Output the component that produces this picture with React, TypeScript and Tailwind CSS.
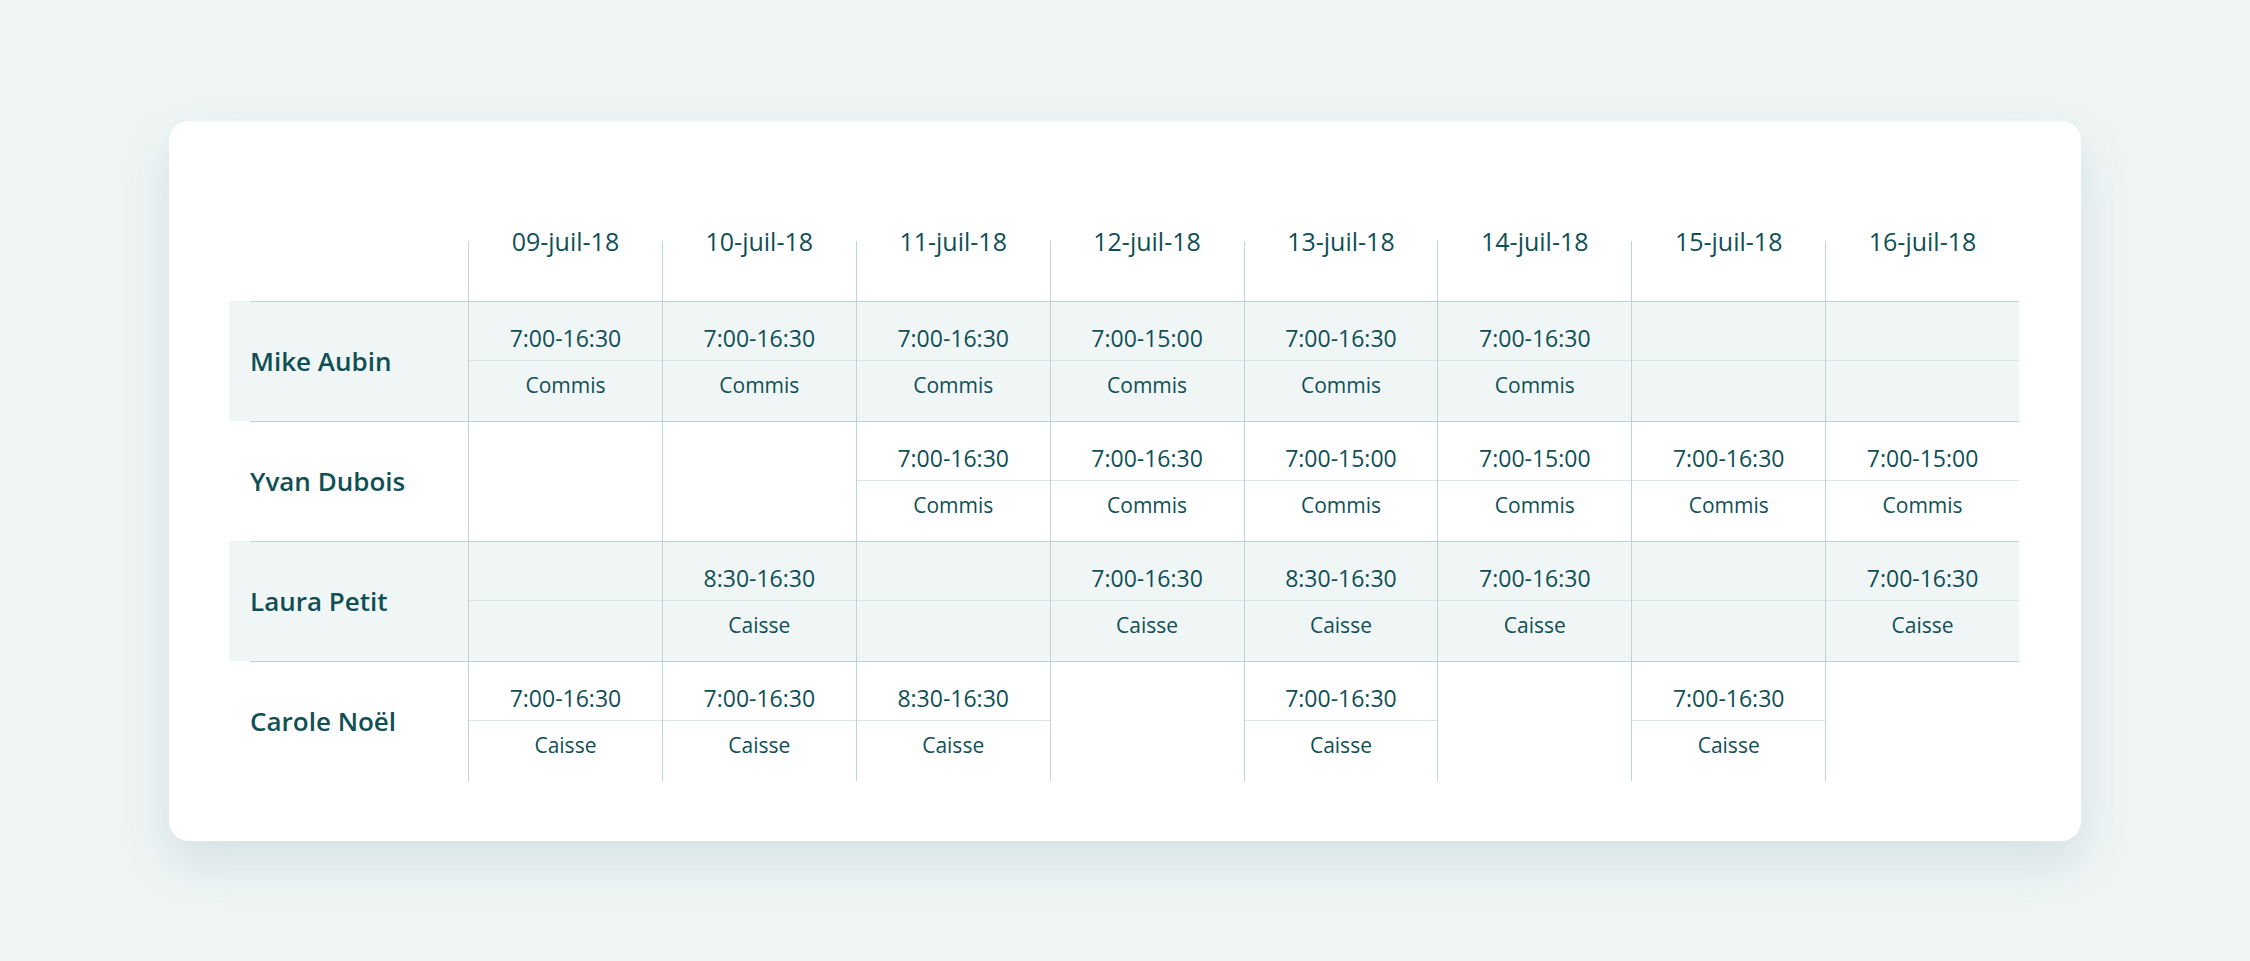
import React from "react";

type Shift = { t: string; r: string } | null;

const days = [
  "09-juil-18",
  "10-juil-18",
  "11-juil-18",
  "12-juil-18",
  "13-juil-18",
  "14-juil-18",
  "15-juil-18",
  "16-juil-18",
];

const C = (t: string): Shift => ({ t, r: "Commis" });
const K = (t: string): Shift => ({ t, r: "Caisse" });

const rows: { name: string; gray: boolean; shifts: Shift[] }[] = [
  {
    name: "Mike Aubin",
    gray: true,
    shifts: [C("7:00-16:30"), C("7:00-16:30"), C("7:00-16:30"), C("7:00-15:00"), C("7:00-16:30"), C("7:00-16:30"), null, null],
  },
  {
    name: "Yvan Dubois",
    gray: false,
    shifts: [null, null, C("7:00-16:30"), C("7:00-16:30"), C("7:00-15:00"), C("7:00-15:00"), C("7:00-16:30"), C("7:00-15:00")],
  },
  {
    name: "Laura Petit",
    gray: true,
    shifts: [null, K("8:30-16:30"), null, K("7:00-16:30"), K("8:30-16:30"), K("7:00-16:30"), null, K("7:00-16:30")],
  },
  {
    name: "Carole Noël",
    gray: false,
    shifts: [K("7:00-16:30"), K("7:00-16:30"), K("8:30-16:30"), null, K("7:00-16:30"), null, K("7:00-16:30"), null],
  },
];

function Cell({ s, gray }: { s: Shift; gray: boolean }) {
  const showLine = s !== null || gray;
  return (
    <div className="flex h-[119px] flex-col border-l border-[#c3d3d5]">
      <div
        className={`flex h-[59px] items-end justify-center pb-[8px] ${showLine ? "border-b border-[#d8e4e5]" : ""}`}
      >
        {s && <span className="text-[23px] leading-[28px]">{s.t}</span>}
      </div>
      <div className="flex h-[60px] justify-center pt-[10px]">
        {s && <span className="text-[21px] leading-[28px]">{s.r}</span>}
      </div>
    </div>
  );
}

export default function App() {
  return (
    <div
      className="flex min-h-[961px] w-full items-center justify-center bg-[#eff5f5] text-[#0f4f55]"
      style={{ fontFamily: '"Open Sans", "Noto Sans", sans-serif' }}
    >
      <div className="w-[1912px] rounded-[20px] bg-white pb-[60px] pl-[81px] pr-[62px] pt-[120px] shadow-[0_22px_50px_rgba(60,115,125,0.15)]">
        {/* header */}
        <div className="grid h-[60px] grid-cols-[218px_repeat(8,1fr)]">
          <div />
          {days.map((d) => (
            <div key={d} className="flex justify-center border-l border-[#c3d3d5]">
              <span className="-mt-[15px] text-[25px] leading-[30px]">{d}</span>
            </div>
          ))}
        </div>
        {/* body */}
        {rows.map((row) => (
          <div key={row.name} className={`-ml-[21px] pl-[21px] ${row.gray ? "bg-[#f0f6f6]" : ""}`}>
            <div className="grid grid-cols-[218px_repeat(8,1fr)] border-t border-[#c0d2d4]">
              <div className="flex items-center">
                <span className="text-[26px] font-semibold leading-[30px]">{row.name}</span>
              </div>
              {row.shifts.map((s, i) => (
                <Cell key={i} s={s} gray={row.gray} />
              ))}
            </div>
          </div>
        ))}
      </div>
    </div>
  );
}
